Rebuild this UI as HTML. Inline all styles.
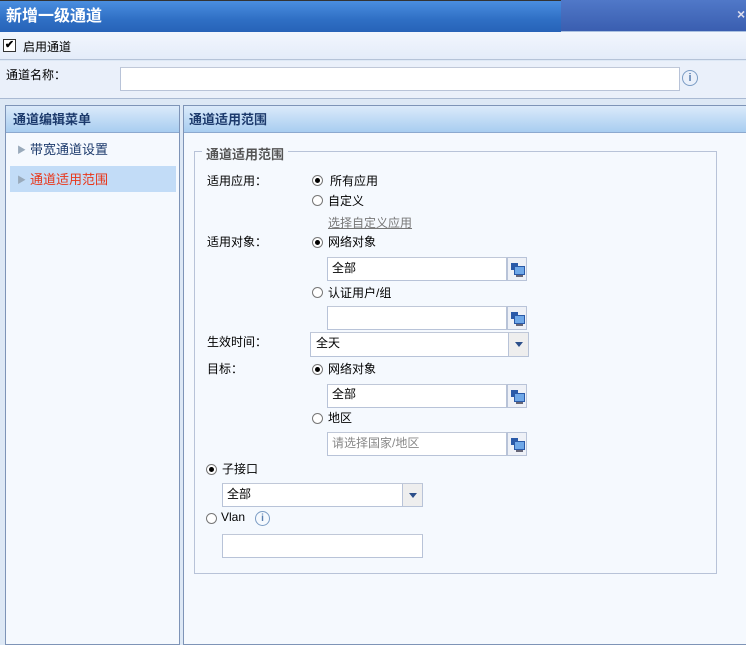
<!DOCTYPE html>
<html><head><meta charset="utf-8"><style>
*{box-sizing:border-box;margin:0;padding:0}
body{width:746px;height:637px;overflow:hidden;background:#dde8f5;font-family:"Liberation Sans","Noto Sans CJK SC",sans-serif;font-size:12px;color:#000;position:relative}
.a{position:absolute}
.title{left:0;top:0;width:746px;height:32px;background:linear-gradient(#4a8ee0,#2f6fc4 60%,#2763b8);border-top:1px solid #333}
.title2{left:561px;top:0;width:185px;height:32px;background:linear-gradient(#5078c8,#3a5eb0);border-bottom:1px solid #a9c0e0}
.inp{background:#fff;border:1px solid #b8c3d8;border-top-color:#c0c8d8;height:24px}
.lbl{font-size:12px}
.pick{width:20px;height:24px;border:1px solid #b8c3d8;background:#eef1f7}
.pick::before{content:"";position:absolute;left:3px;top:5px;width:7px;height:7px;background:#2a5aa8}
.pick::after{content:"";position:absolute;left:6px;top:8px;width:9px;height:7px;background:#6fa8e8;border:1px solid #2a5aa8;box-shadow:0 4px 0 -2px #667}
.radio{width:11px;height:11px;border-radius:50%;border:1px solid #777;background:#fff}
.radio.on::after{content:"";position:absolute;left:2px;top:2px;width:5px;height:5px;border-radius:50%;background:#000}
.dd{width:20px;height:24px;border-left:1px solid #b8c3d8;background:#eee}
.dd::after{content:"";position:absolute;left:6px;top:9px;border:4px solid transparent;border-top:5px solid #2c4f8a}
</style></head><body>
<div class="a title"></div><div class="a title2"></div>
<div class="a" style="left:6px;top:2px;color:#fff;font-weight:bold;font-size:16px">新增一级通道</div>
<div class="a" style="left:737px;top:6px;color:#dde;font-weight:bold;font-size:14px">×</div>
<div class="a" style="left:0;top:32px;width:746px;height:28px;background:linear-gradient(#f2f6fd,#e4ecf9);border-bottom:1px solid #b5c3d8"></div>
<div class="a" style="left:3px;top:39px;width:13px;height:13px;border:1px solid #333;background:#fff;font-size:11px;line-height:11px;text-align:center;font-weight:bold">✔</div>
<div class="a lbl" style="left:23px;top:38px">启用通道</div>
<div class="a" style="left:0;top:61px;width:746px;height:38px;background:#eaf0fa;border-bottom:1px solid #a9b9d2"></div>
<div class="a lbl" style="left:6px;top:66px">通道名称：</div>
<div class="a inp" style="left:120px;top:67px;width:560px;height:24px"></div>
<div class="a" style="left:682px;top:70px;width:16px;height:16px;border-radius:50%;border:1px solid #7b9cc4;color:#5a7fb0;font-size:11px;text-align:center;line-height:14px;font-weight:bold">i</div>
<div class="a" style="left:5px;top:105px;width:175px;height:540px;background:#f5f9fe;border:1px solid #7e94b7"></div>
<div class="a" style="left:6px;top:106px;width:173px;height:27px;background:linear-gradient(#dbeafa,#a8cdf0);border-bottom:1px solid #8ca9cf"></div>
<div class="a" style="left:13px;top:109px;font-weight:bold;color:#1c3a6c;font-size:13px">通道编辑菜单</div>
<div class="a" style="left:17px;top:143px;color:#9ab;font-size:9px">▶</div>
<div class="a" style="left:30px;top:139px;color:#1c3a6c;font-size:13px">带宽通道设置</div>
<div class="a" style="left:10px;top:166px;width:166px;height:26px;background:#c2dcf7"></div>
<div class="a" style="left:17px;top:173px;color:#9ab;font-size:9px">▶</div>
<div class="a" style="left:30px;top:169px;color:#e8361a;font-size:13px">通道适用范围</div>
<div class="a" style="left:183px;top:105px;width:570px;height:540px;background:#f5f9fe;border:1px solid #7e94b7"></div>
<div class="a" style="left:184px;top:106px;width:562px;height:27px;background:linear-gradient(#dbeafa,#a8cdf0);border-bottom:1px solid #8ca9cf"></div>
<div class="a" style="left:189px;top:109px;font-weight:bold;color:#1c3a6c;font-size:13px">通道适用范围</div>
<div class="a" style="left:194px;top:151px;width:523px;height:423px;border:1px solid #b8c3d8"></div>
<div class="a" style="left:202px;top:144px;padding:0 4px;background:#f5f9fe;font-weight:bold;color:#555;font-size:13px">通道适用范围</div>

<div class="a lbl" style="left:207px;top:172px">适用应用：</div>
<div class="a radio on" style="left:312px;top:175px"></div><div class="a lbl" style="left:330px;top:172px">所有应用</div>
<div class="a radio" style="left:312px;top:195px"></div><div class="a lbl" style="left:328px;top:192px">自定义</div>
<div class="a lbl" style="left:328px;top:214px;color:#777;text-decoration:underline">选择自定义应用</div>
<div class="a lbl" style="left:207px;top:233px">适用对象：</div>
<div class="a radio on" style="left:312px;top:237px"></div><div class="a lbl" style="left:328px;top:233px">网络对象</div>
<div class="a inp" style="left:327px;top:257px;width:180px"></div><div class="a lbl" style="left:332px;top:259px">全部</div><div class="a pick" style="left:507px;top:257px"></div>
<div class="a radio" style="left:312px;top:287px"></div><div class="a lbl" style="left:328px;top:284px">认证用户/组</div>
<div class="a inp" style="left:327px;top:306px;width:180px"></div><div class="a pick" style="left:507px;top:306px"></div>
<div class="a lbl" style="left:207px;top:333px">生效时间：</div>
<div class="a inp" style="left:310px;top:332px;width:219px;height:25px"></div><div class="a lbl" style="left:316px;top:334px">全天</div><div class="a dd" style="left:508px;top:333px;height:23px"></div>
<div class="a lbl" style="left:207px;top:360px">目标：</div>
<div class="a radio on" style="left:312px;top:364px"></div><div class="a lbl" style="left:328px;top:360px">网络对象</div>
<div class="a inp" style="left:327px;top:384px;width:180px"></div><div class="a lbl" style="left:332px;top:385px">全部</div><div class="a pick" style="left:507px;top:384px"></div>
<div class="a radio" style="left:312px;top:413px"></div><div class="a lbl" style="left:328px;top:409px">地区</div>
<div class="a inp" style="left:327px;top:432px;width:180px"></div><div class="a lbl" style="left:332px;top:434px;color:#888">请选择国家/地区</div><div class="a pick" style="left:507px;top:432px"></div>
<div class="a radio on" style="left:206px;top:464px"></div><div class="a lbl" style="left:222px;top:460px">子接口</div>
<div class="a inp" style="left:222px;top:483px;width:201px"></div><div class="a lbl" style="left:227px;top:485px">全部</div><div class="a dd" style="left:402px;top:484px;height:22px"></div>
<div class="a radio" style="left:206px;top:513px"></div><div class="a lbl" style="left:221px;top:510px">Vlan</div>
<div class="a" style="left:255px;top:511px;width:15px;height:15px;border-radius:50%;border:1px solid #7b9cc4;color:#5a7fb0;font-size:10px;text-align:center;line-height:13px;font-weight:bold">i</div>
<div class="a inp" style="left:222px;top:534px;width:201px"></div>
</body></html>
